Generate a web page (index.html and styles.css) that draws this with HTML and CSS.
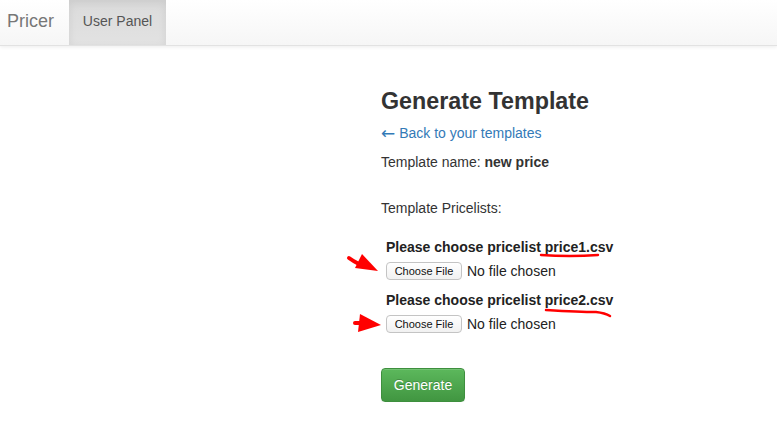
FILE: index.html
```html
<!DOCTYPE html>
<html>
<head>
<meta charset="utf-8">
<link rel="stylesheet" href="styles.css">
</head>
<body>
<nav class="navbar">
  <a class="brand">Pricer</a>
  <a class="nav-item active">User Panel</a>
</nav>
<main class="main">
  <h1 class="title">Generate Template</h1>
  <p class="back"><a><span class="arrow">←</span> Back to your templates</a></p>
  <p class="line">Template name: <b>new price</b></p>
  <p class="line pricelists">Template Pricelists:</p>
  <div class="group">
    <div class="label">Please choose pricelist price1.csv</div>
    <div class="file"><span class="file-btn">Choose File</span><span class="file-text">No file chosen</span></div>
  </div>
  <div class="group">
    <div class="label">Please choose pricelist price2.csv</div>
    <div class="file"><span class="file-btn">Choose File</span><span class="file-text">No file chosen</span></div>
  </div>
  <button class="btn-generate">Generate</button>
</main>
<svg class="marks" width="777" height="442" viewBox="0 0 777 442">
  <path d="M349 258 Q353 261 359 264" stroke="#f00" stroke-width="4" fill="none" stroke-linecap="round"/>
  <polygon points="362,254 378,271 355,268" fill="#f00"/>
  <path d="M355 323 L362 323" stroke="#f00" stroke-width="4" fill="none" stroke-linecap="round"/>
  <polygon points="360,314 381,325 358,332" fill="#f00"/>
  <path d="M541 255 Q570 257 598 255" stroke="#f00" stroke-width="2.5" fill="none" stroke-linecap="round"/>
  <path d="M546 310 Q580 312 596 312 Q605 313 610 316" stroke="#f00" stroke-width="2.5" fill="none" stroke-linecap="round"/>
</svg>
</body>
</html>
```
FILE: styles.css
```css
html, body {
  margin: 0;
  padding: 0;
  background: #fff;
  font-family: "Liberation Sans", Arial, sans-serif;
  font-size: 14px;
  line-height: 20px;
  color: #333;
}
.navbar {
  height: 45px;
  display: flex;
  align-items: stretch;
  background: linear-gradient(to bottom, #ffffff 0%, #f6f6f6 100%);
  border-bottom: 1px solid #e2e2e2;
  box-shadow: 0 1px 4px rgba(0,0,0,0.08);
}
.brand {
  font-size: 18px;
  color: #777;
  padding: 0 15px 0 7px;
  display: flex;
  align-items: center;
  padding-bottom: 4px;
  width: 47px;
}
.nav-item {
  color: #555;
  width: 97px;
  display: flex;
  align-items: center;
  justify-content: center;
  padding-bottom: 4px;
}
.nav-item.active {
  background: linear-gradient(to bottom, #dbdbdb 0%, #e2e2e2 100%);
  box-shadow: inset 0 3px 9px rgba(0,0,0,0.075);
}
.main {
  padding-left: 381px;
  padding-top: 42px;
}
.title {
  margin: 0 0 9px;
  font-size: 23.3px;
  font-weight: bold;
  line-height: 26px;
  color: #333;
}
.back {
  margin: 0 0 9px;
  height: 20px;
}
.back a {
  color: #337ab7;
}
.arrow {
  font-family: "DejaVu Sans", sans-serif;
  font-size: 17px;
  line-height: 0;
  vertical-align: -1px;
}
.line {
  margin: 0;
}
.pricelists {
  margin-top: 26px;
}
.group {
  padding-left: 5px;
  margin-top: 19px;
}
.group + .group {
  margin-top: 10px;
}
.label {
  font-weight: bold;
  color: #222;
}
.file {
  display: flex;
  align-items: center;
  margin-top: 5px;
  height: 18px;
}
.file-btn {
  box-sizing: border-box;
  width: 76px;
  height: 18px;
  border: 1px solid #c4c4c4;
  border-radius: 4px;
  background: linear-gradient(#ffffff, #f1f1f1);
  font-size: 11px;
  line-height: 16px;
  text-align: center;
  color: #111;
}
.file-text {
  margin-left: 5px;
  font-size: 14px;
  color: #222;
}
.btn-generate {
  display: block;
  margin-top: 35px;
  width: 84px;
  height: 34px;
  border: 1px solid #3e8f3e;
  border-radius: 4px;
  background: linear-gradient(to bottom, #5cb85c 0%, #419641 100%);
  color: #fff;
  font-family: "Liberation Sans", Arial, sans-serif;
  font-size: 14px;
  text-shadow: 0 -1px 0 rgba(0,0,0,0.2);
  box-shadow: inset 0 1px 0 rgba(255,255,255,0.15), 0 1px 1px rgba(0,0,0,0.075);
  padding: 0;
}
.marks {
  position: absolute;
  left: 0;
  top: 0;
  pointer-events: none;
}
```
